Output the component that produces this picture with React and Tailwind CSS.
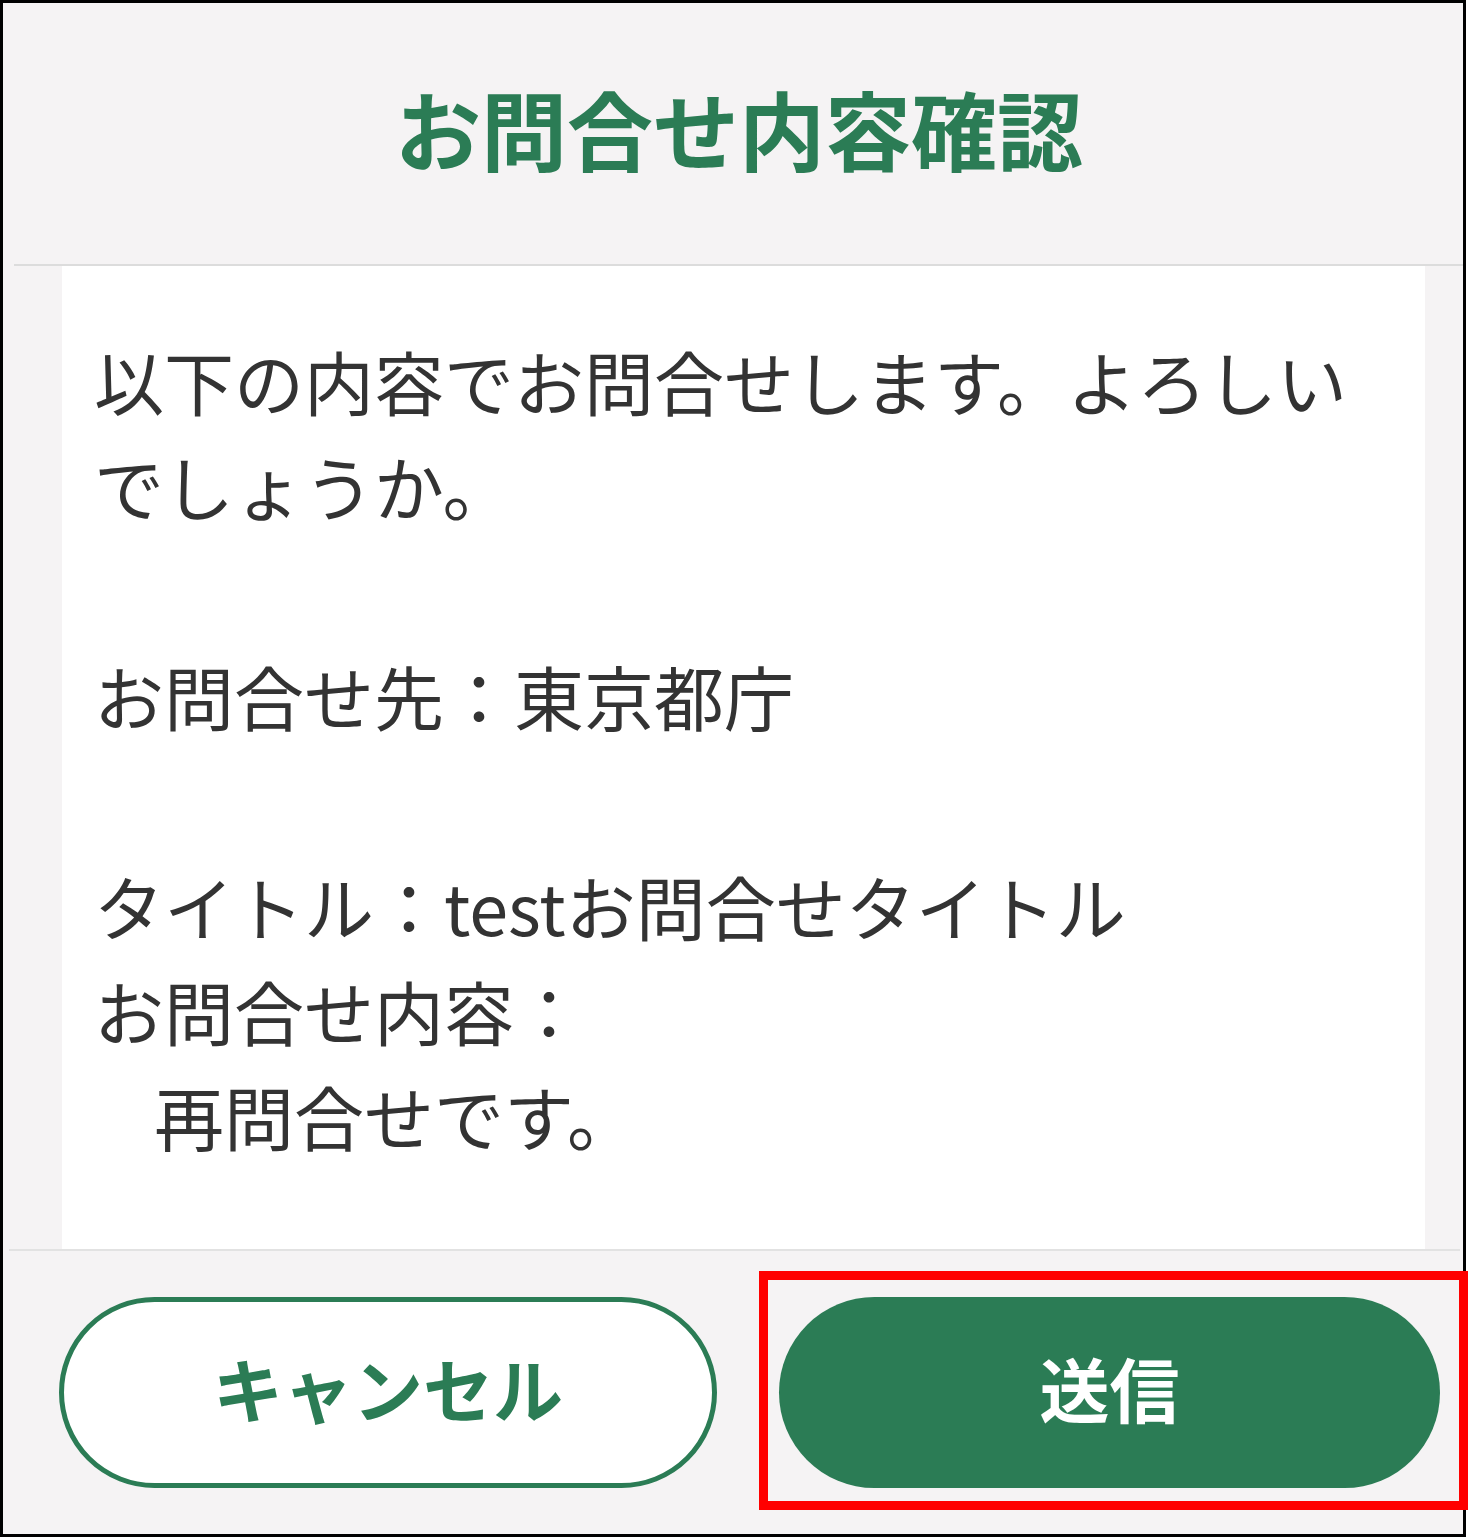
import React from 'react';

const jp = { fontFamily: '"Noto Sans CJK JP", "Noto Sans", sans-serif' };

const ConfirmDialog = () => {
  return (
    <div className="relative w-[1468px] h-[1539px] bg-white" style={jp}>
      <div className="w-[1466px] h-[1537px] border-[3px] border-black bg-[#f5f3f4] flex flex-col">
        {/* Header */}
        <div className="h-[261px] flex items-center justify-center">
          <h1 className="text-[86px] font-bold text-[#2b7c55] leading-none -mt-[12px] ml-[12px]">
            お問合せ内容確認
          </h1>
        </div>
        <div className="ml-[11px] h-[2px] bg-[#dcdcdc]" />

        {/* Body */}
        <div className="flex-1 flex pl-[59px] pr-[38px]">
          <div className="flex-1 bg-white pt-[62px] pl-[32px] pr-[30px] text-[70px] leading-[105px] text-[#333333]">
            <p>以下の内容でお問合せします。よろしいでしょうか。</p>
            <p className="h-[105px]" />
            <p>お問合せ先：東京都庁</p>
            <p className="h-[105px]" />
            <p>タイトル：testお問合せタイトル</p>
            <p>お問合せ内容：</p>
            <p className="pl-[60px]">再問合せです。</p>
          </div>
        </div>
        <div className="ml-[6px] mr-[3px] h-[2px] bg-[#e2e2e2]" />

        {/* Footer */}
        <div className="h-[283px] flex items-start pt-[46px] pl-[56px] gap-[62px]">
          <button className="w-[658px] h-[191px] rounded-full border-[5px] border-[#2b7c55] bg-white text-[#2b7c55] text-[70px] font-bold pb-[10px]">
            キャンセル
          </button>
          <button className="w-[661px] h-[191px] rounded-full bg-[#2b7c55] text-white text-[70px] font-bold pb-[10px]">
            送信
          </button>
        </div>
      </div>

      {/* annotation highlight */}
      <div className="absolute left-[759px] top-[1271px] w-[709px] h-[239px] border-[9px] border-[#ff0000]" />
    </div>
  );
};

export default function App() {
  return <ConfirmDialog />;
}
